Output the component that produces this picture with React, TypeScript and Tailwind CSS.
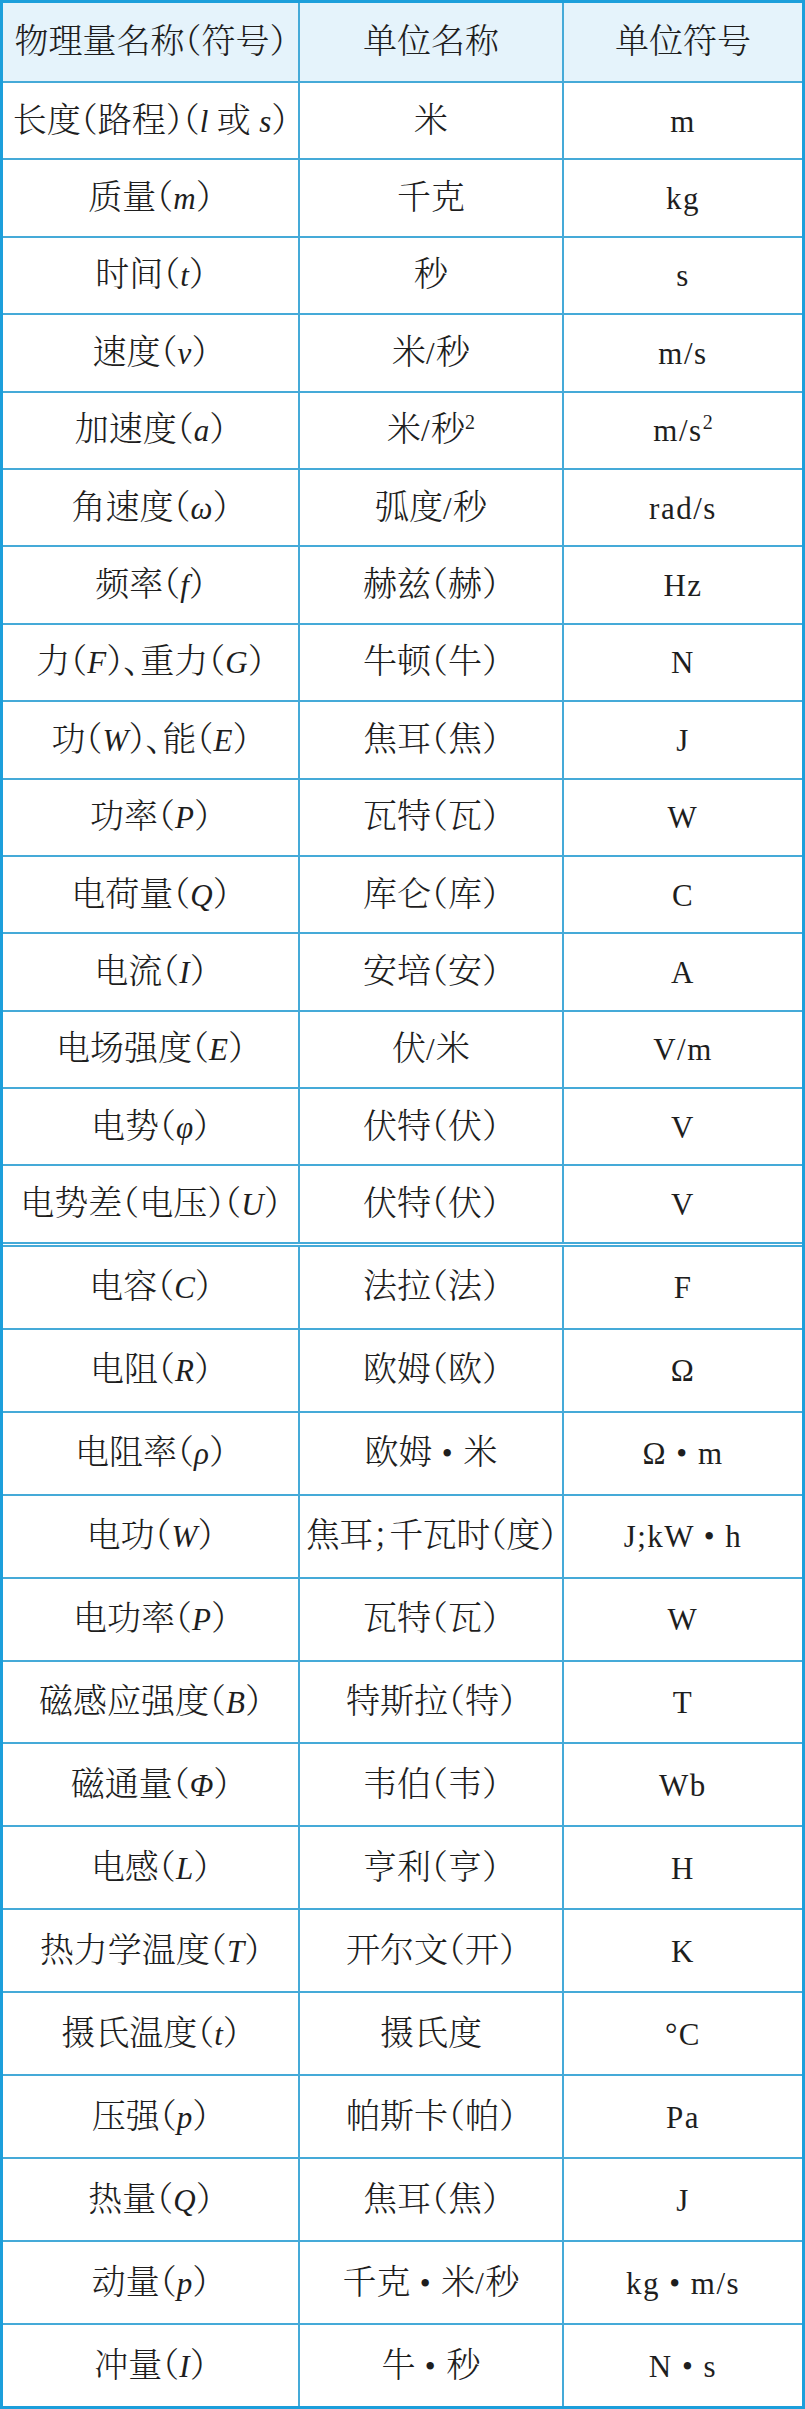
import React from "react";

const V = ({ children }: { children: React.ReactNode }) => (
  <i className="italic text-[31px] font-normal">{children}</i>
);
const L = ({ children }: { children: React.ReactNode }) => (
  <span className="text-[31px] font-normal tracking-[1.5px]">{children}</span>
);
const Sup = () => <sup className="text-[20px] relative -top-[12px] font-normal">2</sup>;

type Row = [React.ReactNode, React.ReactNode, React.ReactNode];

const part1: Row[] = [
  [<>长度（路程）（<V>l</V> 或 <V>s</V>）</>, "米", <L>m</L>],
  [<>质量（<V>m</V>）</>, "千克", <L>kg</L>],
  [<>时间（<V>t</V>）</>, "秒", <L>s</L>],
  [<>速度（<V>v</V>）</>, <>米<L>/</L>秒</>, <L>m/s</L>],
  [<>加速度（<V>a</V>）</>, <>米<L>/</L>秒<Sup /></>, <><L>m/s</L><Sup /></>],
  [<>角速度（<V>ω</V>）</>, <>弧度<L>/</L>秒</>, <L>rad/s</L>],
  [<>频率（<V>f</V>）</>, "赫兹（赫）", <L>Hz</L>],
  [<>力（<V>F</V>）、重力（<V>G</V>）</>, "牛顿（牛）", <L>N</L>],
  [<>功（<V>W</V>）、能（<V>E</V>）</>, "焦耳（焦）", <L>J</L>],
  [<>功率（<V>P</V>）</>, "瓦特（瓦）", <L>W</L>],
  [<>电荷量（<V>Q</V>）</>, "库仑（库）", <L>C</L>],
  [<>电流（<V>I</V>）</>, "安培（安）", <L>A</L>],
  [<>电场强度（<V>E</V>）</>, <>伏<L>/</L>米</>, <L>V/m</L>],
  [<>电势（<V>φ</V>）</>, "伏特（伏）", <L>V</L>],
  [<>电势差（电压）（<V>U</V>）</>, "伏特（伏）", <L>V</L>],
];

const part2: Row[] = [
  [<>电容（<V>C</V>）</>, "法拉（法）", <L>F</L>],
  [<>电阻（<V>R</V>）</>, "欧姆（欧）", <L>Ω</L>],
  [<>电阻率（<V>ρ</V>）</>, <>欧姆<L> • </L>米</>, <L>Ω • m</L>],
  [<>电功（<V>W</V>）</>, <span className="tracking-[-0.5px]">焦耳；千瓦时（度）</span>, <L>J;kW • h</L>],
  [<>电功率（<V>P</V>）</>, "瓦特（瓦）", <L>W</L>],
  [<>磁感应强度（<V>B</V>）</>, "特斯拉（特）", <L>T</L>],
  [<>磁通量（<V>Φ</V>）</>, "韦伯（韦）", <L>Wb</L>],
  [<>电感（<V>L</V>）</>, "亨利（亨）", <L>H</L>],
  [<>热力学温度（<V>T</V>）</>, "开尔文（开）", <L>K</L>],
  [<>摄氏温度（<V>t</V>）</>, "摄氏度", <L>°C</L>],
  [<>压强（<V>p</V>）</>, "帕斯卡（帕）", <L>Pa</L>],
  [<>热量（<V>Q</V>）</>, "焦耳（焦）", <L>J</L>],
  [<>动量（<V>p</V>）</>, <>千克<L> • </L>米<L>/</L>秒</>, <L>kg • m/s</L>],
  [<>冲量（<V>I</V>）</>, <>牛<L> • </L>秒</>, <L>N • s</L>],
];

const Cells = ({ row }: { row: Row }) => (
  <>
    <div className="flex items-center justify-center border-r-2 border-[#45aad8]">
      <span className="whitespace-pre">{row[0]}</span>
    </div>
    <div className="flex items-center justify-center border-r-2 border-[#45aad8]">
      <span className="whitespace-pre">{row[1]}</span>
    </div>
    <div className="flex items-center justify-center">
      <span className="whitespace-pre">{row[2]}</span>
    </div>
  </>
);

export default function App() {
  return (
    <div className="w-[805px] h-[2409px] bg-white border-[3px] border-[#1c9fdb] flex flex-col text-[34px] leading-none text-[#1e1e1e] font-['Liberation_Serif','Noto_Serif_CJK_SC','Noto_Sans_CJK_SC',serif] [font-feature-settings:'halt'] font-light">
      <div className="flex flex-col">
        <div className="grid grid-cols-[297px_264px_1fr] h-[80px] bg-[#e5f3fb] border-b-2 border-[#45aad8]">
          <Cells row={["物理量名称（符号）", "单位名称", "单位符号"]} />
        </div>
        {part1.map((r, i) => (
          <div key={i} className="grid grid-cols-[297px_264px_1fr] h-[77.4px] border-b-2 border-[#45aad8]">
            <Cells row={r} />
          </div>
        ))}
      </div>
      <div className="h-[1px] bg-white" />
      <div className="flex flex-col flex-1 border-t-2 border-[#45aad8]">
        {part2.map((r, i) => (
          <div
            key={i}
            className={
              i < part2.length - 1
                ? "grid grid-cols-[297px_264px_1fr] flex-1 border-b-2 border-[#45aad8]"
                : "grid grid-cols-[297px_264px_1fr] flex-1"
            }
          >
            <Cells row={r} />
          </div>
        ))}
      </div>
    </div>
  );
}
